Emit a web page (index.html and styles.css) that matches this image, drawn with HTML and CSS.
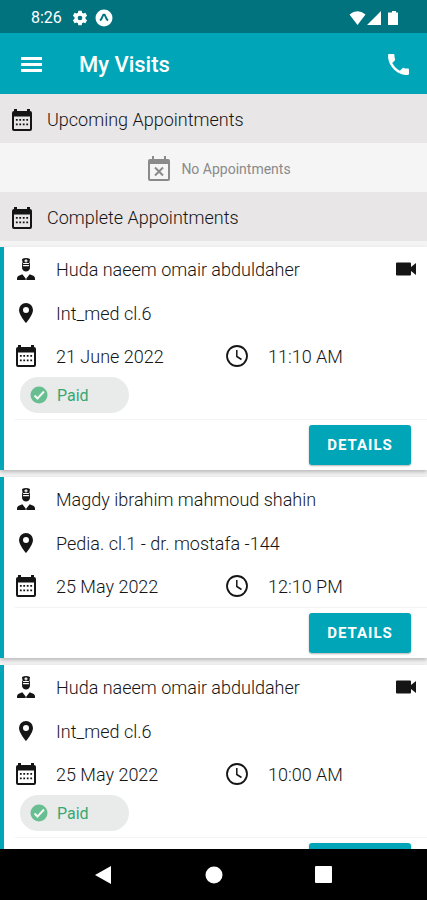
FILE: index.html
```html
<!DOCTYPE html>
<html lang="en">
<head>
<meta charset="utf-8">
<meta name="viewport" content="width=device-width, initial-scale=1">
<title>My Visits</title>
<link rel="stylesheet" href="styles.css">
</head>
<body>
<svg class="sprite" aria-hidden="true">
  <symbol id="calendar" viewBox="0 0 22 24">
    <path fill="currentColor" fill-rule="evenodd" d="M3 1h3v2h10V1h3v2a2 2 0 0 1 2 2v16a2 2 0 0 1-2 2H3a2 2 0 0 1-2-2V5a2 2 0 0 1 2-2zM3 8.500v12.500h16V8.500z"/>
    <path fill="currentColor" d="M8.300 11h1.800v1.800H8.300zM11.800 11h1.800v1.800h-1.800zM15.300 11h1.800v1.800h-1.800zM4.900 11h1.800v1.800H4.900zM4.900 15.500h1.800v1.800H4.900zM8.300 15.500h1.800v1.800H8.300zM11.800 15.500h1.800v1.800h-1.800zM15.300 15.500h1.800v1.800h-1.800z"/>
  </symbol>
  <symbol id="calendar-x" viewBox="0 0 24 27">
    <path fill="currentColor" fill-rule="evenodd" d="M5 1h2v3h10V1h2v3h2a2 2 0 0 1 2 2v18a2 2 0 0 1-2 2H3a2 2 0 0 1-2-2V6a2 2 0 0 1 2-2h2zM3 9v15h18V9z"/>
    <path fill="none" stroke="currentColor" stroke-width="2" d="M8 12.500l8 8M16 12.500l-8 8"/>
  </symbol>
  <symbol id="doctor" viewBox="0 0 20 24">
    <path fill="currentColor" fill-rule="evenodd" d="M6 2q4-2 8 0l-.6 4H6.600zM9.400 2.200v1H8.400v1.200h1v1h1.200v-1h1V3.200h-1v-1z"/>
    <path fill="none" stroke="currentColor" d="M6.600 6v4M13.400 6v4M6.500 7.500h7"/>
    <path fill="currentColor" d="M6.100 9.200h7.800v2.300q-1 3-3.900 3t-3.900-3zM1 23v-1.500q0-2.500 3-3.300l2.300-1 3.400 4.300V23zM19 23v-1.500q0-2.500-3-3.300l-2.300-1-3.400 4.300V23z"/>
  </symbol>
  <symbol id="pin" viewBox="0 0 16 22">
    <path fill="currentColor" fill-rule="evenodd" d="M8 1a7 7 0 0 1 7 7c0 5-7 13-7 13S1 13 1 8a7 7 0 0 1 7-7zm0 4a3 3 0 1 0 0 6 3 3 0 0 0 0-6z"/>
  </symbol>
  <symbol id="clock" viewBox="0 0 24 24">
    <circle cx="12" cy="12" r="10" fill="none" stroke="currentColor" stroke-width="1.800"/>
    <path fill="none" stroke="currentColor" stroke-width="1.500" d="M11.800 6v6.500l4.700 3"/>
  </symbol>
  <symbol id="video" viewBox="0 0 20 14">
    <path fill="currentColor" d="M1 .500h13a1 1 0 0 1 1 1V5l5-4v12l-5-4v3.500a1 1 0 0 1-1 1H1a1 1 0 0 1-1-1v-11a1 1 0 0 1 1-1z"/>
  </symbol>
  <symbol id="check" viewBox="0 0 18 18">
    <circle cx="9" cy="9" r="8.500" fill="currentColor"/>
    <path fill="none" stroke="#f2f7f4" stroke-width="2" d="M4.500 9.500l3 3 6.500-7"/>
  </symbol>
</svg>
<div class="screen">
  <div class="status">
    <span class="time">8:26</span>
    <svg class="status-gear" viewBox="0 0 24 24"><path fill="#fff" fill-rule="evenodd" d="M9.500 1h5l.6 3.200 2 1.100 3-1.100 2.500 4.300-2.400 2.200v2.600l2.400 2.200-2.500 4.300-3-1.100-2 1.100-.6 3.200h-5l-.6-3.200-2-1.100-3 1.100-2.500-4.300 2.400-2.200v-2.600L1.400 8.500l2.500-4.300 3 1.100 2-1.100zM12 8.500a3.500 3.500 0 1 0 0 7 3.500 3.500 0 0 0 0-7z"/></svg>
    <svg class="status-app" viewBox="0 0 18 18"><circle cx="9" cy="9" r="8.500" fill="#fff"/><path d="M5 11.500Q6.500 10.500 7.300 8T9 5.500 10.700 8t2.300 3.500" fill="none" stroke="#00737f" stroke-width="2"/></svg>
    <svg class="status-signal" viewBox="0 0 50 16"><path fill="#fff" d="M8.500 15L.500 4.500Q8.500-2 16.500 4.500zM32 1v14H18zM41 2.500h2V1h4v1.500h2V15H39V2.500z"/></svg>
  </div>
  <header class="appbar">
    <button class="icon-button" aria-label="Menu"><svg class="menu-icon" viewBox="0 0 21 15"><path stroke="#fff" stroke-width="3" d="M0 1.500h21M0 7.500h21M0 13.500h21"/></svg></button>
    <h1>My Visits</h1>
    <button class="icon-button" aria-label="Call"><svg class="phone-icon" viewBox="3 3 18 18"><path fill="#fff" d="M6.620 10.790c1.440 2.830 3.760 5.140 6.590 6.590l2.200-2.200c.27-.27.670-.36 1.020-.24 1.120.37 2.330.57 3.570.57.550 0 1 .45 1 1V20c0 .55-.45 1-1 1-9.390 0-17-7.610-17-17 0-.55.450-1 1-1h3.500c.55 0 1 .45 1 1 0 1.250.2 2.450.57 3.570.11.350.03.740-.25 1.020z"/></svg></button>
  </header>
  <main>
    <h2 class="section"><svg class="calendar-icon"><use href="#calendar"/></svg>Upcoming Appointments</h2>
    <p class="empty"><svg class="empty-icon"><use href="#calendar-x"/></svg>No Appointments</p>
    <h2 class="section"><svg class="calendar-icon"><use href="#calendar"/></svg>Complete Appointments</h2>
    <div class="visits">
      <article class="visit">
        <div class="row"><svg class="doctor-icon"><use href="#doctor"/></svg><span class="value">Huda naeem omair abduldaher</span><svg class="video-icon"><use href="#video"/></svg></div>
        <div class="row"><svg class="pin-icon"><use href="#pin"/></svg><span class="value">Int_med cl.6</span></div>
        <div class="row when"><svg class="calendar-icon"><use href="#calendar"/></svg><span class="value">21 June 2022</span><svg class="clock-icon"><use href="#clock"/></svg><span class="value">11:10 AM</span></div>
        <div class="chip"><svg class="check-icon"><use href="#check"/></svg>Paid</div>
        <div class="actions"><button class="details">DETAILS</button></div>
      </article>
      <article class="visit">
        <div class="row"><svg class="doctor-icon"><use href="#doctor"/></svg><span class="value">Magdy ibrahim mahmoud shahin</span></div>
        <div class="row"><svg class="pin-icon"><use href="#pin"/></svg><span class="value">Pedia. cl.1 - dr. mostafa -144</span></div>
        <div class="row when"><svg class="calendar-icon"><use href="#calendar"/></svg><span class="value">25 May 2022</span><svg class="clock-icon"><use href="#clock"/></svg><span class="value">12:10 PM</span></div>
        <div class="actions"><button class="details">DETAILS</button></div>
      </article>
      <article class="visit">
        <div class="row"><svg class="doctor-icon"><use href="#doctor"/></svg><span class="value">Huda naeem omair abduldaher</span><svg class="video-icon"><use href="#video"/></svg></div>
        <div class="row"><svg class="pin-icon"><use href="#pin"/></svg><span class="value">Int_med cl.6</span></div>
        <div class="row when"><svg class="calendar-icon"><use href="#calendar"/></svg><span class="value">25 May 2022</span><svg class="clock-icon"><use href="#clock"/></svg><span class="value">10:00 AM</span></div>
        <div class="chip"><svg class="check-icon"><use href="#check"/></svg>Paid</div>
        <div class="actions"><button class="details">DETAILS</button></div>
      </article>
    </div>
  </main>
  <nav class="navbar">
    <button class="nav-button" aria-label="Back"><svg class="nav-icon" viewBox="0 0 18 18"><path fill="#fff" d="M16 0v18L0 9z"/></svg></button>
    <button class="nav-button" aria-label="Home"><svg class="nav-icon" viewBox="0 0 18 18"><circle cx="9" cy="9" r="8.500" fill="#fff"/></svg></button>
    <button class="nav-button" aria-label="Recents"><svg class="nav-icon" viewBox="0 0 18 18"><rect width="17" height="17" rx="1" fill="#fff"/></svg></button>
  </nav>
</div>
</body>
</html>
```
FILE: styles.css
```css
* { box-sizing: border-box; }
body {
  margin: 0;
  font-family: Roboto, "Liberation Sans", sans-serif;
  font-size: 18px;
  font-weight: 300;
  color: #151515;
}
h1, h2, p { margin: 0; }
button { border: 0; padding: 0; background: none; font-family: inherit; }
svg { display: block; flex: none; }
.sprite { position: absolute; width: 0; height: 0; }
.screen { display: flex; flex-direction: column; height: 100vh; background: #f4f4f4; }

.status {
  display: flex;
  align-items: center;
  flex: none;
  height: 33px;
  padding: 2px 28px 0 31px;
  background: #00737f;
  color: #fff;
}
.time { font-size: 16px; font-weight: 400; }
.status-gear { width: 16px; height: 16px; margin-left: 10px; }
.status-app { width: 18px; height: 18px; margin-left: 7px; }
.status-signal { width: 50px; height: 16px; margin-left: auto; }

.appbar {
  display: flex;
  align-items: center;
  flex: none;
  height: 61px;
  padding: 2px 18px 0 21px;
  background: #00a5b8;
  color: #fff;
}
.appbar h1 { flex: 1; margin-left: 37px; font-size: 22px; font-weight: 500; }
.menu-icon { width: 21px; height: 15px; }
.phone-icon { width: 21px; height: 21px; }

main { flex: 1; min-height: 0; overflow: hidden auto; scrollbar-width: none; }
.section {
  display: flex;
  align-items: center;
  gap: 14px;
  height: 49px;
  padding: 2px 11px 0;
  background: #e8e6e7;
  color: #151515;
  font-size: 18px;
  font-weight: 300;
}
.calendar-icon { width: 22px; height: 24px; }
.empty {
  display: flex;
  align-items: center;
  justify-content: center;
  gap: 10px;
  height: 49px;
  padding: 2px 0 0 11px;
  background: #f5f5f5;
  color: #8a8a8a;
  font-size: 14px;
  font-weight: 400;
}
.empty-icon { width: 24px; height: 27px; }

.visits { display: flex; flex-direction: column; gap: 7px; padding-top: 6px; }
.visit {
  border-left: 4px solid #00a5b8;
  background: #fff;
  box-shadow: 0 2px 4px rgba(0, 0, 0, 0.25);
}
.row {
  display: grid;
  grid-template-columns: 22px 1fr auto;
  column-gap: 19px;
  align-items: center;
  justify-items: start;
  height: 44px;
  padding: 0 11px;
}
.when { grid-template-columns: 22px 150px 24px 1fr; height: 42px; }
.doctor-icon, .pin-icon { justify-self: center; }
.doctor-icon { width: 20px; height: 24px; }
.pin-icon { width: 16px; height: 22px; }
.clock-icon { width: 24px; height: 24px; }
.video-icon { width: 20px; height: 14px; }
.chip {
  display: flex;
  align-items: center;
  gap: 9px;
  width: 109px;
  height: 36px;
  margin: 0 0 6px 16px;
  padding: 0 10px;
  border-radius: 18px;
  background: #e9eaea;
  color: #35a871;
  font-size: 16px;
  font-weight: 400;
}
.check-icon { width: 18px; height: 18px; color: #68bd91; }
.actions {
  display: flex;
  justify-content: flex-end;
  margin-left: 11px;
  padding: 5px 16px 5px 0;
  border-top: 1px solid #f3f3f3;
}
.details {
  width: 102px;
  height: 40px;
  border-radius: 3px;
  background: #00a5b8;
  box-shadow: 0 1px 2px rgba(0, 0, 0, 0.3);
  color: #fff;
  font-size: 15px;
  font-weight: 700;
  letter-spacing: 1px;
}

.navbar {
  display: flex;
  align-items: center;
  justify-content: center;
  gap: 92px;
  flex: none;
  height: 51px;
  background: #000;
}
.nav-icon { width: 18px; height: 18px; }
```
